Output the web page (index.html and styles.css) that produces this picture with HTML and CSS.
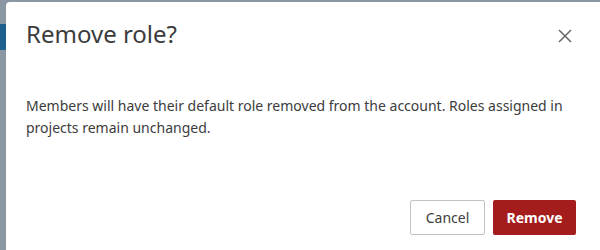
FILE: index.html
```html
<!DOCTYPE html>
<html>
  <head>
    <meta charset="UTF-8" />
    <meta name="viewport" content="width=device-width, initial-scale=1.0" />
    <title>Remove role</title>
    <link rel="stylesheet" href="styles.css">
  </head>
  <body>
    <div class="dialog">
      <div class="dialog-header">
        <h2 class="dialog-title">Remove role?</h2>
        <button class="close-btn" aria-label="Close">
          <svg width="14" height="14" viewBox="0 0 14 14">
            <path d="M1 1 L13 13 M13 1 L1 13" stroke="#666" stroke-width="1.5" fill="none" />
          </svg>
        </button>
      </div>
      <p class="dialog-text">
        Members will have their default role removed from the account. Roles assigned in
        projects remain unchanged.
      </p>
      <div class="dialog-footer">
        <button class="btn btn-secondary">Cancel</button>
        <button class="btn btn-danger">Remove</button>
      </div>
    </div>
  </body>
</html>
```

FILE: styles.css
```css
body {
  margin: 0;
  height: 250px;
  overflow: hidden;
  font-family: "Noto Sans", Arial, sans-serif;
  background: linear-gradient(#1d5f8f, #1d5f8f) 0 24px / 6px 26px no-repeat, #8b97a2;
}

.dialog {
  margin: 2px 0 0 6px;
  height: 248px;
  background: #fff;
  border-radius: 4px 0 0 0;
  box-sizing: border-box;
  padding: 16px 24px 0 20px;
  display: flex;
  flex-direction: column;
}

.dialog-header {
  display: flex;
  justify-content: space-between;
  align-items: center;
}

.dialog-title {
  margin: 0;
  font-size: 24px;
  font-weight: normal;
  line-height: 32px;
  color: #3c3c3c;
}

.close-btn {
  width: 24px;
  height: 24px;
  padding: 0;
  margin: 4px -1px 0 0;
  border: none;
  background: none;
  display: flex;
  align-items: center;
  justify-content: center;
  cursor: pointer;
}

.dialog-text {
  margin: 45px 0 0 0;
  font-size: 14px;
  line-height: 22px;
  color: #3c3c3c;
}

.dialog-footer {
  display: flex;
  justify-content: flex-end;
  gap: 8px;
  margin-top: 61px;
}

.btn {
  height: 35px;
  font-family: "Noto Sans", Arial, sans-serif;
  font-size: 14px;
  border-radius: 2px;
  cursor: pointer;
}

.btn-secondary {
  width: 75px;
  background: #fff;
  color: #3c3c3c;
  border: 1px solid #c2c2c2;
}

.btn-danger {
  width: 83px;
  background: #a51c1c;
  color: #fff;
  font-weight: bold;
  border: none;
}
```
